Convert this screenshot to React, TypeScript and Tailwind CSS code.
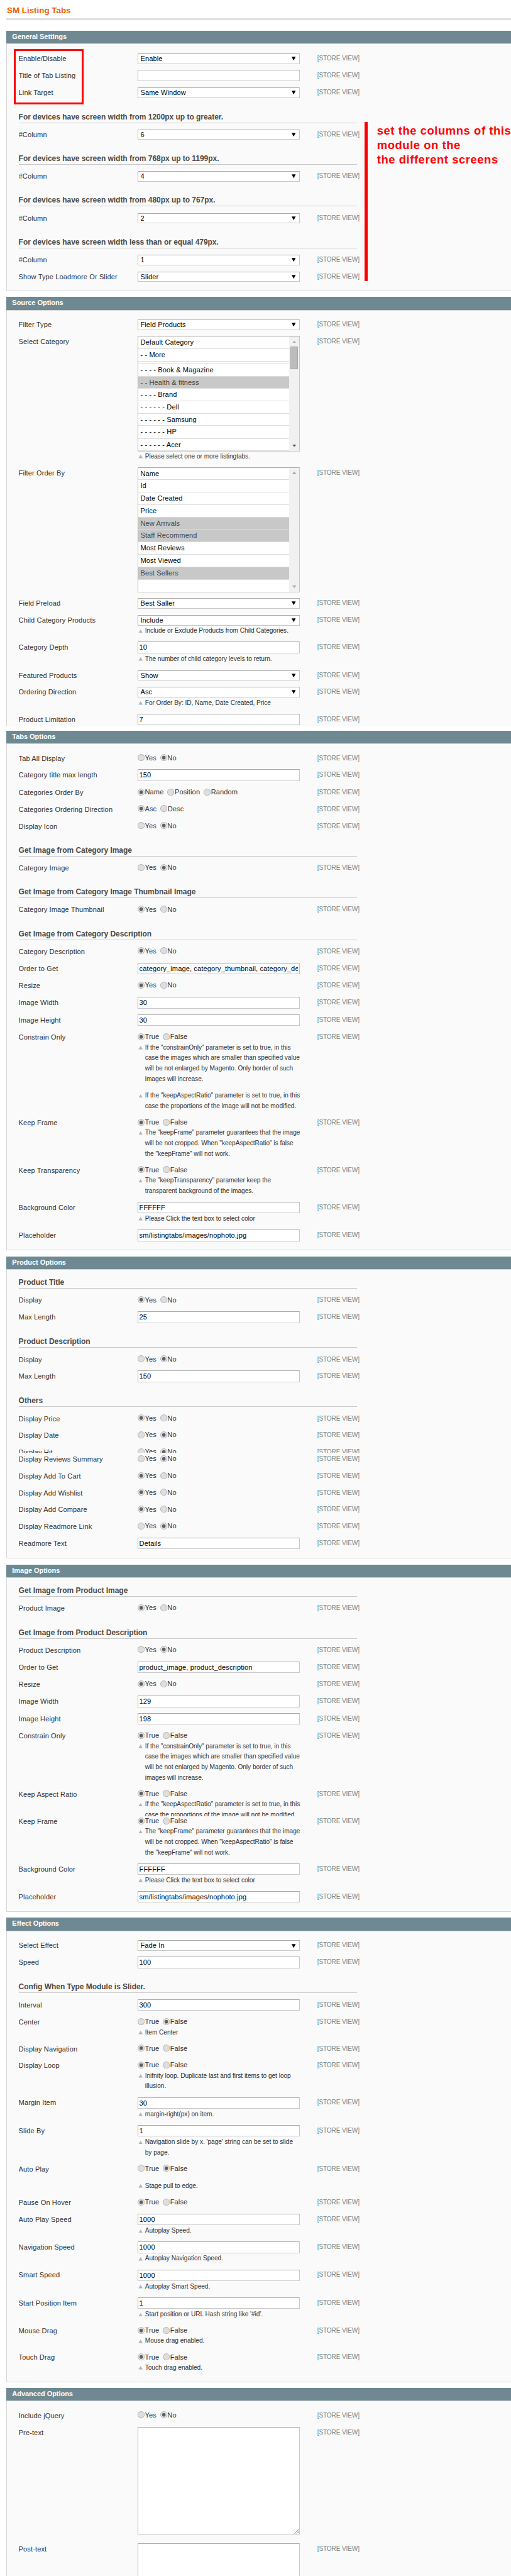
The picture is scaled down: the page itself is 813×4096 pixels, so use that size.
import React from "react";
import clsx from "clsx";

type ListItem = { text: string; height: string; selected?: boolean };

function Heading({ children, first = false }: { children: string; first?: boolean }) {
  return (
    <div className={clsx("shrink-0", first ? "h-[28px]" : "h-[43px]")}>
      <h4
        className={clsx(
          "w-[584px] border-b border-[#c8c8c8] text-[13px] leading-[18px] font-bold tracking-[-0.03px] text-[#4a4a4a]",
          first ? "h-[22px] pt-[2.5px]" : "h-[37px] pt-[17.5px]",
        )}
      >
        {children}
      </h4>
    </div>
  );
}

function Row({
  label,
  height,
  shift,
  children,
}: {
  label: string;
  height: string;
  shift?: string;
  children: React.ReactNode;
}) {
  return (
    <div className={clsx("shrink-0 overflow-hidden", height)}>
      <div className={clsx("flex items-start", shift)}>
        <div className="w-[205px] pt-[5px] text-[12px] leading-[18px] tracking-[0.12px] text-[#2f2f2f]">{label}</div>
        <div className="w-[280px]">{children}</div>
        <div className="ml-[30px] pt-[5px] text-[11px] leading-[18px] tracking-[-0.17px] whitespace-nowrap text-[#6f8992]">
          [STORE VIEW]
        </div>
      </div>
    </div>
  );
}

const fieldBorder = "border border-t-[#aaaaaa] border-r-[#c8c8c8] border-b-[#c8c8c8] border-l-[#aaaaaa] bg-white text-[12px] text-black";

function Select({ value }: { value: string }) {
  return (
    <div className={clsx("mt-[5px] flex h-[18px] items-center justify-between pr-[6px] pl-[4px] leading-[16px] tracking-[0.12px]", fieldBorder)}>
      <span>{value}</span>
      <svg className="h-[7px] w-[7px]" viewBox="0 0 7 7">
        <path d="M0 0.3h7L3.5 6.8z" fill="#000" />
      </svg>
    </div>
  );
}

function Input({ value = "" }: { value?: string }) {
  return (
    <div className={clsx("mt-[4px] h-[20px] px-[2px] leading-[18px] tracking-[0.13px]", fieldBorder)}>
      <div className="h-[18px] overflow-hidden whitespace-nowrap">{value}</div>
    </div>
  );
}

function Radio({ options, checked }: { options: string[]; checked: number }) {
  return (
    <div className="flex h-[22px] items-start gap-[6.3px] pt-[4px]">
      {options.map((option, i) => (
        <label key={option} className="flex gap-[0.5px] text-[12px] leading-[18px] tracking-[0.12px] text-[#2f2f2f]">
          <svg className="mt-[2.7px] h-[12.2px] w-[12.2px]" viewBox="0 0 12 12">
            <circle cx="6" cy="6" r="5.5" fill={i === checked ? "#e6e6e6" : "#dedede"} stroke="#aeaeae" />
            {i === checked && <circle cx="6" cy="6" r="3" fill="#606060" />}
          </svg>
          {option}
        </label>
      ))}
    </div>
  );
}

const YesNo = ({ no = false }: { no?: boolean }) => <Radio options={["Yes", "No"]} checked={no ? 1 : 0} />;
const TrueFalse = ({ no = false }: { no?: boolean }) => <Radio options={["True", "False"]} checked={no ? 1 : 0} />;

function Note({ lines, className = "pt-[0.8px]" }: { lines: string[]; className?: string }) {
  return (
    <div className={clsx("flex text-[11px] leading-[18px] tracking-[-0.03px] text-[#2f2f2f]", className)}>
      <svg className="mt-[6px] ml-[1px] h-[6px] w-[8px] shrink-0" viewBox="0 0 8 6">
        <path d="M4 0l3.8 6H0.2z" fill="#a6b9bf" />
      </svg>
      <div className="ml-[4px] whitespace-nowrap">
        {lines.map((line) => (
          <div key={line}>{line}</div>
        ))}
      </div>
    </div>
  );
}

function ListBox({ items, height, thumb = false }: { items: ListItem[]; height: string; thumb?: boolean }) {
  return (
    <div className={clsx("mt-[4px] flex overflow-hidden", height, fieldBorder)}>
      <div className="flex-1">
        {items.map((item, i) => (
          <div
            key={i}
            className={clsx(
              "overflow-hidden border-b border-[#dcdcdc] pl-[4px] leading-[20px] tracking-[0.12px] whitespace-nowrap",
              item.height,
              item.selected ? "bg-[#c8c8c8] text-[#444444]" : "text-black",
            )}
          >
            {item.text}
          </div>
        ))}
      </div>
      <div className="flex w-[17px] flex-col items-center bg-[#f1f1f1] pt-[7px] pb-[7px]">
        <svg className="h-[4px] w-[7px]" viewBox="0 0 7 4">
          <path d="M3.5 0L7 4H0z" fill="#a3a3a3" />
        </svg>
        {thumb && <div className="mt-[6px] h-[39px] w-[13px] border border-[#a8a8a8] bg-[#bcbcbc]" />}
        <svg className="mt-auto h-[4px] w-[7px]" viewBox="0 0 7 4">
          <path d="M0 0h7L3.5 4z" fill={thumb ? "#505050" : "#a3a3a3"} />
        </svg>
      </div>
    </div>
  );
}

function TextArea() {
  return (
    <div className={clsx("mt-[4px] flex h-[186px] items-end justify-end", fieldBorder)}>
      <svg className="h-[9px] w-[9px]" viewBox="0 0 9 9">
        <path d="M0.5 8.5l8-8M4.5 8.5l4-4" stroke="#555" strokeWidth="0.9" />
      </svg>
    </div>
  );
}

function Section({
  title,
  body,
  open = false,
  children,
}: {
  title: string;
  body: string;
  open?: boolean;
  children: React.ReactNode;
}) {
  return (
    <section className="shrink-0">
      <h3 className="h-[22px] bg-[#6f8992] pl-[10px] text-[12px] leading-[21px] font-bold tracking-[-0.08px] text-white">
        {title}
      </h3>
      <div
        className={clsx(
          "flex flex-col overflow-hidden border-t border-l border-[#d6d6d6] bg-[#fafafa] pt-[11px] pl-[20px]",
          !open && "border-b",
          body,
        )}
      >
        {children}
      </div>
    </section>
  );
}

const categories: ListItem[] = [
  { text: "Default Category", height: "h-[21px]" },
  { text: "- - More", height: "h-[22px]" },
  { text: "", height: "h-[4px]" },
  { text: "- - - - Book & Magazine", height: "h-[22px]" },
  { text: "- - Health & fitness", height: "h-[21px]", selected: true },
  { text: "- - - - Brand", height: "h-[21px]" },
  { text: "- - - - - - Dell", height: "h-[22px]" },
  { text: "- - - - - - Samsung", height: "h-[21px]" },
  { text: "- - - - - - HP", height: "h-[22px]" },
  { text: "- - - - - - Acer", height: "h-[21px]" },
];

const orders: ListItem[] = [
  { text: "Name", height: "h-[21px]" },
  { text: "Id", height: "h-[22px]" },
  { text: "Date Created", height: "h-[21px]" },
  { text: "Price", height: "h-[22px]" },
  { text: "New Arrivals", height: "h-[21px]", selected: true },
  { text: "Staff Recommend", height: "h-[21px]", selected: true },
  { text: "Most Reviews", height: "h-[22px]" },
  { text: "Most Viewed", height: "h-[21px]" },
  { text: "Best Sellers", height: "h-[22px]", selected: true },
];

const constrainNote = [
  'If the "constrainOnly" parameter is set to true, in this',
  "case the images which are smaller than specified value",
  "will be not enlarged by Magento. Only border of such",
  "images will increase.",
];
const ratioNote = [
  'If the "keepAspectRatio" parameter is set to true, in this',
  "case the proportions of the image will not be modified.",
];
const frameNote = [
  'The "keepFrame" parameter guarantees that the image',
  'will be not cropped. When "keepAspectRatio" is false',
  'the "keepFrame" will not work.',
];

export default function App() {
  return (
    <div className="relative h-[4439px] w-full overflow-hidden bg-white pl-[11px] font-['Liberation_Sans',Arial,sans-serif] [zoom:0.9227]">
      <div className="flex flex-col">
        <h1 className="h-[35px] shrink-0 border-b-4 border-[#dfdfdf] pt-[9.3px] pl-[1px] text-[14.5px] leading-[18px] font-bold text-[#eb5e00]">
          SM Listing Tabs
        </h1>
        <div className="flex flex-col gap-[10px] pt-[18px]">
          <Section title="General Settings" body="h-[427px]">
            <Row label="Enable/Disable" height="h-[29px]"><Select value="Enable" /></Row>
            <Row label="Title of Tab Listing" height="h-[30px]"><Input /></Row>
            <Row label="Link Target" height="h-[29px]"><Select value="Same Window" /></Row>
            <Heading>For devices have screen width from 1200px up to greater.</Heading>
            <Row label="#Column" height="h-[29px]"><Select value="6" /></Row>
            <Heading>For devices have screen width from 768px up to 1199px.</Heading>
            <Row label="#Column" height="h-[29px]"><Select value="4" /></Row>
            <Heading>For devices have screen width from 480px up to 767px.</Heading>
            <Row label="#Column" height="h-[29px]"><Select value="2" /></Row>
            <Heading>For devices have screen width less than or equal 479px.</Heading>
            <Row label="#Column" height="h-[29px]"><Select value="1" /></Row>
            <Row label="Show Type Loadmore Or Slider" height="h-[29px]"><Select value="Slider" /></Row>
          </Section>

          <div className="-mb-[3px] shrink-0">
            <Section title="Source Options" body="h-[718px]" open>
              <Row label="Filter Type" height="h-[29px]"><Select value="Field Products" /></Row>
              <Row label="Select Category" height="h-[226px]">
                <ListBox items={categories} height="h-[199px]" thumb />
                <Note className="pt-0" lines={["Please select one or more listingtabs."]} />
              </Row>
              <Row label="Filter Order By" height="h-[225px]">
                <ListBox items={orders} height="h-[216px]" />
              </Row>
              <Row label="Field Preload" height="h-[29px]"><Select value="Best Saller" /></Row>
              <Row label="Child Category Products" height="h-[47px]">
                <Select value="Include" />
                <Note lines={["Include or Exclude Products from Child Categories."]} />
              </Row>
              <Row label="Category Depth" height="h-[48px]">
                <Input value="10" />
                <Note lines={["The number of child category levels to return."]} />
              </Row>
              <Row label="Featured Products" height="h-[29px]"><Select value="Show" /></Row>
              <Row label="Ordering Direction" height="h-[47px]">
                <Select value="Asc" />
                <Note lines={["For Order By: ID, Name, Date Created, Price"]} />
              </Row>
              <Row label="Product Limitation" height="h-[26px]"><Input value="7" /></Row>
            </Section>
          </div>

          <Section title="Tabs Options" body="h-[874px]">
            <Row label="Tab All Display" height="h-[29px]"><YesNo no /></Row>
            <Row label="Category title max length" height="h-[30px]"><Input value="150" /></Row>
            <Row label="Categories Order By" height="h-[29px]">
              <Radio options={["Name", "Position", "Random"]} checked={0} />
            </Row>
            <Row label="Categories Ordering Direction" height="h-[29px]">
              <Radio options={["Asc", "Desc"]} checked={0} />
            </Row>
            <Row label="Display Icon" height="h-[29px]"><YesNo no /></Row>
            <Heading>Get Image from Category Image</Heading>
            <Row label="Category Image" height="h-[29px]"><YesNo no /></Row>
            <Heading>Get Image from Category Image Thumbnail Image</Heading>
            <Row label="Category Image Thumbnail" height="h-[29px]"><YesNo /></Row>
            <Heading>Get Image from Category Description</Heading>
            <Row label="Category Description" height="h-[29px]"><YesNo /></Row>
            <Row label="Order to Get" height="h-[30px]">
              <Input value="category_image, category_thumbnail, category_de" />
            </Row>
            <Row label="Resize" height="h-[29px]"><YesNo /></Row>
            <Row label="Image Width" height="h-[30px]"><Input value="30" /></Row>
            <Row label="Image Height" height="h-[30px]"><Input value="30" /></Row>
            <Row label="Constrain Only" height="h-[147px]">
              <TrueFalse />
              <Note lines={constrainNote} />
              <Note className="mt-[11px]" lines={ratioNote} />
            </Row>
            <Row label="Keep Frame" height="h-[82px]">
              <TrueFalse />
              <Note lines={frameNote} />
            </Row>
            <Row label="Keep Transparency" height="h-[64px]">
              <TrueFalse />
              <Note lines={['The "keepTransparency" parameter keep the', "transparent background of the images."]} />
            </Row>
            <Row label="Background Color" height="h-[48px]">
              <Input value="FFFFFF" />
              <Note lines={["Please Click the text box to select color"]} />
            </Row>
            <Row label="Placeholder" height="h-[30px]"><Input value="sm/listingtabs/images/nophoto.jpg" /></Row>
          </Section>

          <Section title="Product Options" body="h-[499px]">
            <Heading first>Product Title</Heading>
            <Row label="Display" height="h-[29px]"><YesNo /></Row>
            <Row label="Max Length" height="h-[30px]"><Input value="25" /></Row>
            <Heading>Product Description</Heading>
            <Row label="Display" height="h-[29px]"><YesNo no /></Row>
            <Row label="Max Length" height="h-[30px]"><Input value="150" /></Row>
            <Heading>Others</Heading>
            <Row label="Display Price" height="h-[29px]"><YesNo /></Row>
            <Row label="Display Date" height="h-[29px]"><YesNo no /></Row>
            <Row label="Display Hit" height="h-[15px]"><YesNo no /></Row>
            <Row label="Display Reviews Summary" height="h-[26px]" shift="-mt-[3px]"><YesNo no /></Row>
            <Row label="Display Add To Cart" height="h-[29px]"><YesNo /></Row>
            <Row label="Display Add Wishlist" height="h-[29px]"><YesNo /></Row>
            <Row label="Display Add Compare" height="h-[29px]"><YesNo /></Row>
            <Row label="Display Readmore Link" height="h-[29px]"><YesNo no /></Row>
            <Row label="Readmore Text" height="h-[30px]"><Input value="Details" /></Row>
          </Section>

          <Section title="Image Options" body="h-[577px]">
            <Heading first>Get Image from Product Image</Heading>
            <Row label="Product Image" height="h-[29px]"><YesNo /></Row>
            <Heading>Get Image from Product Description</Heading>
            <Row label="Product Description" height="h-[29px]"><YesNo no /></Row>
            <Row label="Order to Get" height="h-[30px]"><Input value="product_image, product_description" /></Row>
            <Row label="Resize" height="h-[29px]"><YesNo /></Row>
            <Row label="Image Width" height="h-[30px]"><Input value="129" /></Row>
            <Row label="Image Height" height="h-[30px]"><Input value="198" /></Row>
            <Row label="Constrain Only" height="h-[100px]">
              <TrueFalse />
              <Note lines={constrainNote} />
            </Row>
            <Row label="Keep Aspect Ratio" height="h-[52px]">
              <TrueFalse />
              <Note lines={ratioNote} />
            </Row>
            <Row label="Keep Frame" height="h-[77px]" shift="-mt-[5px]">
              <TrueFalse />
              <Note lines={frameNote} />
            </Row>
            <Row label="Background Color" height="h-[48px]">
              <Input value="FFFFFF" />
              <Note lines={["Please Click the text box to select color"]} />
            </Row>
            <Row label="Placeholder" height="h-[30px]"><Input value="sm/listingtabs/images/nophoto.jpg" /></Row>
          </Section>

          <Section title="Effect Options" body="h-[778px]">
            <Row label="Select Effect" height="h-[29px]"><Select value="Fade In" /></Row>
            <Row label="Speed" height="h-[30px]"><Input value="100" /></Row>
            <Heading>Config When Type Module is Slider.</Heading>
            <Row label="Interval" height="h-[30px]"><Input value="300" /></Row>
            <Row label="Center" height="h-[46px]">
              <TrueFalse no />
              <Note lines={["Item Center"]} />
            </Row>
            <Row label="Display Navigation" height="h-[29px]"><TrueFalse /></Row>
            <Row label="Display Loop" height="h-[64px]">
              <TrueFalse />
              <Note lines={["Inifnity loop. Duplicate last and first items to get loop", "illusion."]} />
            </Row>
            <Row label="Margin Item" height="h-[48px]">
              <Input value="30" />
              <Note lines={["margin-right(px) on item."]} />
            </Row>
            <Row label="Slide By" height="h-[66px]">
              <Input value="1" />
              <Note lines={["Navigation slide by x. 'page' string can be set to slide", "by page."]} />
            </Row>
            <Row label="Auto Play" height="h-[58px]">
              <TrueFalse no />
              <Note className="mt-[12.5px]" lines={["Stage pull to edge."]} />
            </Row>
            <Row label="Pause On Hover" height="h-[29px]"><TrueFalse /></Row>
            <Row label="Auto Play Speed" height="h-[48px]">
              <Input value="1000" />
              <Note lines={["Autoplay Speed."]} />
            </Row>
            <Row label="Navigation Speed" height="h-[48px]">
              <Input value="1000" />
              <Note lines={["Autoplay Navigation Speed."]} />
            </Row>
            <Row label="Smart Speed" height="h-[48px]">
              <Input value="1000" />
              <Note lines={["Autoplay Smart Speed."]} />
            </Row>
            <Row label="Start Position Item" height="h-[48px]">
              <Input value="1" />
              <Note lines={["Start position or URL Hash string like '#id'."]} />
            </Row>
            <Row label="Mouse Drag" height="h-[46px]">
              <TrueFalse />
              <Note lines={["Mouse drag enabled."]} />
            </Row>
            <Row label="Touch Drag" height="h-[46px]">
              <TrueFalse />
              <Note lines={["Touch drag enabled."]} />
            </Row>
          </Section>

          <Section title="Advanced Options" body="h-[310px]" open>
            <Row label="Include jQuery" height="h-[29px]"><YesNo no /></Row>
            <Row label="Pre-text" height="h-[201px]"><TextArea /></Row>
            <Row label="Post-text" height="h-[201px]"><TextArea /></Row>
          </Section>
        </div>
      </div>

      <div className="absolute top-[85px] left-[24px] h-[95px] w-[120px] border-4 border-[#ff0000]" />
      <div className="absolute top-[210px] left-[629px] h-[274px] w-[5px] bg-[#ff0000]" />
      <p className="absolute top-[212.7px] left-[650px] text-[20px] leading-[25px] font-bold tracking-[0.6px] whitespace-nowrap text-[#ff0000]">
        set the columns of this
        <br />
        module on the
        <br />
        the different screens
      </p>
    </div>
  );
}
